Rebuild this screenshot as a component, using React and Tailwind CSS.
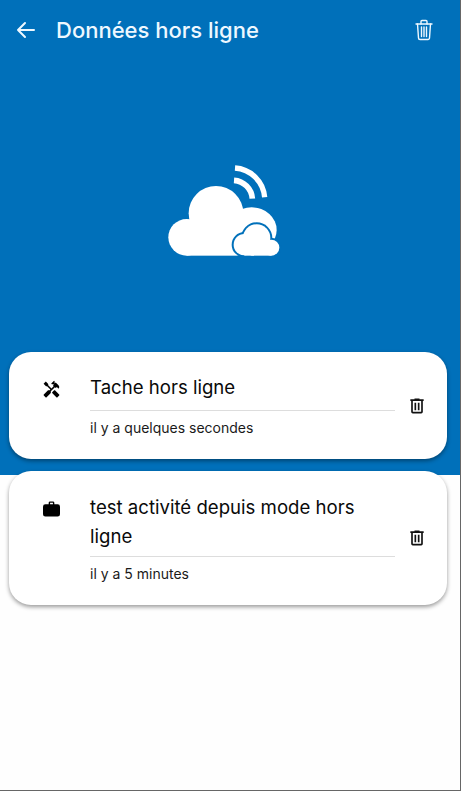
import { MdHandyman } from 'react-icons/md';

const TRASH = 'M9,3V4H4V6H5V19A2,2 0 0,0 7,21H17A2,2 0 0,0 19,19V6H20V4H15V3H9M7,6H17V19H7V6M9,8V17H11V8H9M13,8V17H15V8H13Z';

function CloudIcon() {
  return (
    <svg viewBox="0 0 450 360" className="w-[150px] h-[120px]">
      <g fill="none" stroke="#fff">
        <path d="M255 54A96 96 0 0 1 344 142" strokeWidth="16" />
        <path d="M252 91A59 59 0 0 1 307 146" strokeWidth="17" />
      </g>
      <g fill="#fff">
        <circle cx="110" cy="262" r="55" />
        <circle cx="198" cy="190" r="82" />
        <ellipse cx="305" cy="240" rx="75" ry="68" />
        <rect x="110" y="240" width="202" height="77" />
      </g>
      <g fill="#0070ba">
        <circle cx="283" cy="284" r="38" />
        <circle cx="320" cy="264" r="47" />
        <circle cx="364" cy="293" r="30" />
      </g>
      <g fill="#fff">
        <circle cx="283" cy="284" r="32" />
        <circle cx="320" cy="264" r="41" />
        <circle cx="364" cy="293" r="24" />
        <rect x="283" y="280" width="81" height="37" />
      </g>
    </svg>
  );
}

function HeaderTrash() {
  return (
    <svg viewBox="0 0 20 22" className="w-5 h-[22px]" fill="none" stroke="#eef8ff" strokeWidth="1.4" strokeLinecap="round" strokeLinejoin="round">
      <path d="M2 5H18" />
      <path d="M7 5V2.5A1 1 0 0 1 8 1.5H12A1 1 0 0 1 13 2.5V5" />
      <path d="M3.5 5L4.5 19A1.5 1.5 0 0 0 6 20.5H14A1.5 1.5 0 0 0 15.5 19L16.5 5" />
      <path d="M7.5 8V17.5M10 8V17.5M12.5 8V17.5" />
    </svg>
  );
}

function Briefcase() {
  return (
    <svg viewBox="0 0 18 16" className="w-[17px] h-[16px]" fill="#000">
      <path d="M6 3V1.5A1.5 1.5 0 0 1 7.5 0H10.5A1.5 1.5 0 0 1 12 1.5V3H15.5A2.5 2.5 0 0 1 18 5.5V13.5A2.5 2.5 0 0 1 15.5 16H2.5A2.5 2.5 0 0 1 0 13.5V5.5A2.5 2.5 0 0 1 2.5 3H6ZM7.5 1.5V3H10.5V1.5H7.5Z" fillRule="evenodd" />
    </svg>
  );
}

function OfflineCard({ icon, title, when, bodyClass, titleClass }) {
  return (
    <div className="flex bg-white rounded-[22px] shadow-[0_2px_4px_rgba(0,0,0,0.4)]">
      <div className="w-[81px] shrink-0 pt-[27px] pl-[3px] flex justify-center items-start">
        <div className="h-[21px] flex items-center">{icon}</div>
      </div>
      <div className={`flex-1 min-w-0 pb-[21px] ${bodyClass}`}>
        <p className={`text-[18.6px] leading-[29px] text-[#0a0a0a] pr-[24px] ${titleClass}`}>{title}</p>
        <p className="border-t border-[#ddd] pt-[7px] text-[14px] leading-5 text-[#1a1a1a]">{when}</p>
      </div>
      <div className="w-[52px] shrink-0 flex items-center justify-center pr-[8px]">
        <svg viewBox="0 0 24 24" className="w-[20px] h-[20px]" fill="#111"><path d={TRASH} /></svg>
      </div>
    </div>
  );
}

export default function App() {
  return (
    <div className="h-[791px] bg-[#fefefe] border-r border-b border-[#666] font-['Inter',Arial,sans-serif] overflow-hidden">
      <div className="h-[475px] bg-[#0070ba]">
        <header className="h-[60px] flex items-center pl-[16px] pr-[26px] text-[#eef8ff]">
          <svg viewBox="0 0 20 20" className="w-5 h-5" fill="none" stroke="currentColor" strokeWidth="2" strokeLinecap="round" strokeLinejoin="round">
            <path d="M2 10H18M9 3L2 10L9 17" />
          </svg>
          <h1 className="ml-[20px] flex-1 text-[22px] font-medium">Données hors ligne</h1>
          <HeaderTrash />
        </header>
        <div className="mt-[90px] flex justify-center pr-[10px]">
          <CloudIcon />
        </div>
      </div>
      <div className="-mt-[123px] ml-[9px] mr-[13px] flex flex-col gap-[12px]">
        <OfflineCard icon={<MdHandyman size={19} color="#000" />} title="Tache hors ligne" when="il y a quelques secondes" bodyClass="pt-[21px]" titleClass="pb-[8px]" />
        <OfflineCard icon={<Briefcase />} title="test activité depuis mode hors ligne" when="il y a 5 minutes" bodyClass="pt-[22px]" titleClass="pb-[5px]" />
      </div>
    </div>
  );
}
